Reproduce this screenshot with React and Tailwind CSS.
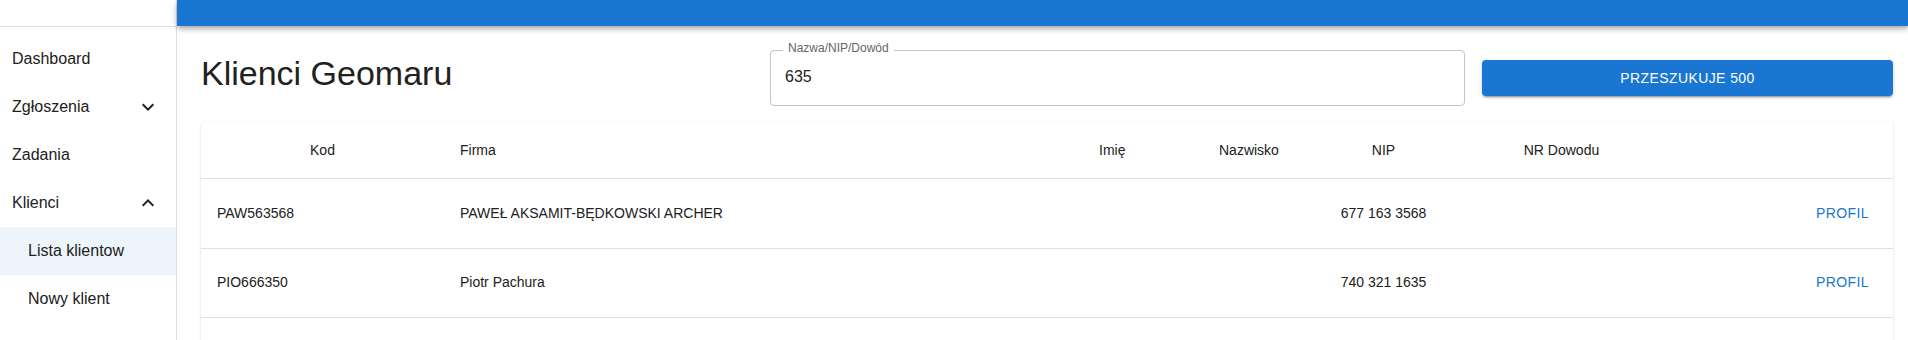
import React from 'react'

// Klienci list page — sidebar nav, blue app bar, search row and clients table.

const NAV = [
  { label: 'Dashboard' },
  { label: 'Zgłoszenia', icon: 'more' },
  { label: 'Zadania' },
  { label: 'Klienci', icon: 'less' },
  { label: 'Lista klientow', sub: true, active: true },
  { label: 'Nowy klient', sub: true },
  { label: 'Artykuły' },
]

const ROWS = [
  { kod: 'PAW563568', firma: 'PAWEŁ AKSAMIT-BĘDKOWSKI ARCHER', nip: '677 163 3568' },
  { kod: 'PIO666350', firma: 'Piotr Pachura', nip: '740 321 1635' },
  { kod: 'MAR635120', firma: 'Marek Nowak', nip: '635 120 4471' },
]

const COLS = 'grid grid-cols-[243px_639px_120px_120px_121px_235px_1fr]'

function Chevron({ dir }) {
  return (
    <svg viewBox="0 0 24 24" className="w-6 h-6 fill-[#212121]">
      {dir === 'more' ? (
        <path d="M16.59 8.59 12 13.17 7.41 8.59 6 10l6 6 6-6z" />
      ) : (
        <path d="m12 8-6 6 1.41 1.41L12 10.83l4.59 4.58L18 14z" />
      )}
    </svg>
  )
}

export default function App() {
  return (
    <div className="w-[1908px] h-[340px] overflow-hidden flex bg-white font-['Liberation_Sans',Arial,sans-serif] text-[#212121]">
      {/* Sidebar */}
      <aside className="w-[177px] shrink-0 border-r border-[#e0e0e0] flex flex-col">
        <div className="h-[27px] shrink-0 border-b border-[#e0e0e0]" />
        <nav className="pt-2">
          {NAV.map((item) => (
            <div
              key={item.label}
              className={`h-12 flex items-center pr-4 text-base ${item.sub ? 'pl-[28px]' : 'pl-[12px]'} ${item.active ? 'bg-[#edf4fb]' : ''}`}
            >
              <span className="flex-1">{item.label}</span>
              {item.icon && <Chevron dir={item.icon} />}
            </div>
          ))}
        </nav>
      </aside>

      {/* Main */}
      <div className="flex-1 min-w-0 flex flex-col">
        <div className="h-[26px] shrink-0 bg-[#1976d2] relative z-10 shadow-[0px_2px_4px_-1px_rgba(0,0,0,0.2),0px_4px_5px_0px_rgba(0,0,0,0.14),0px_1px_10px_0px_rgba(0,0,0,0.12)]" />

        <div className="pl-6 pr-[15px] pt-6">
          {/* Title + search */}
          <div className="flex items-start">
            <h1 className="w-[569px] shrink-0 mt-[2px] text-[34px] leading-[42px] font-normal text-[#212121]">
              Klienci Geomaru
            </h1>
            <div className="w-[695px] shrink-0 h-[56px] relative border border-[#c4c4c4] rounded flex items-center pl-[14px] pb-[2px]">
              <span className="absolute left-[12px] -top-[9px] px-[5px] bg-white text-[12px] leading-[12px] text-[#666666]">
                Nazwa/NIP/Dowód
              </span>
              <span className="text-base">635</span>
            </div>
            <button className="ml-[17px] flex-1 h-9 mt-[10px] rounded bg-[#1976d2] text-white text-sm font-normal tracking-[0.4px] shadow-[0px_3px_1px_-2px_rgba(0,0,0,0.2),0px_2px_2px_0px_rgba(0,0,0,0.14),0px_1px_5px_0px_rgba(0,0,0,0.12)]">
              PRZESZUKUJE 500
            </button>
          </div>

          {/* Table */}
          <div className="mt-4 rounded bg-white shadow-[0px_2px_1px_-1px_rgba(0,0,0,0.2),0px_1px_1px_0px_rgba(0,0,0,0.14),0px_1px_3px_0px_rgba(0,0,0,0.12)] text-sm">
            <div className={`${COLS} h-[57px] pb-[1px] items-center border-b border-[#e0e0e0]`}>
              <div className="text-center">Kod</div>
              <div className="pl-4">Firma</div>
              <div className="pl-4">Imię</div>
              <div className="pl-4">Nazwisko</div>
              <div className="text-center">NIP</div>
              <div className="text-center">NR Dowodu</div>
              <div />
            </div>
            {ROWS.map((r, i) => (
              <div
                key={r.kod}
                className={`${COLS} items-center pb-[2px] border-b border-[#e0e0e0] ${i === 0 ? 'h-[70px]' : 'h-[69px]'}`}
              >
                <div className="pl-4">{r.kod}</div>
                <div className="pl-4">{r.firma}</div>
                <div />
                <div />
                <div className="text-center">{r.nip}</div>
                <div />
                <div className="flex justify-end pr-6">
                  <span className="text-[#1976d2] tracking-[0.4px]">PROFIL</span>
                </div>
              </div>
            ))}
          </div>
        </div>
      </div>
    </div>
  )
}
